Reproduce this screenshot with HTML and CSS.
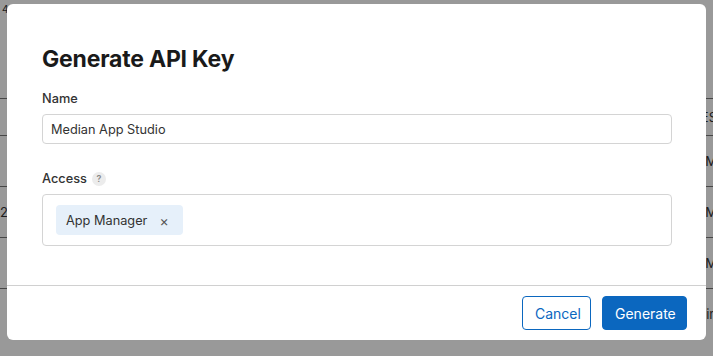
FILE: index.html
```html
<!DOCTYPE html>
<html lang="en">
<head>
  <meta charset="UTF-8">
  <title>Generate API Key</title>
  <link rel="stylesheet" href="styles.css">
</head>
<body>

  <div class="page">
    <div class="page-top">4/7/2024, 1:00 PM · Tylor Nguyen</div>
    <div class="row"><span></span><span>ES</span></div>
    <div class="row tall"><span></span><span>M</span></div>
    <div class="row tall"><span>2</span><span>M</span></div>
    <div class="row tall"><span></span><span>M</span></div>
    <div class="row tall"><span></span><span>in</span></div>
  </div>

  <div class="overlay"></div>

  <div class="modal">
    <div class="modal-body">
      <h1>Generate API Key</h1>

      <label class="field-label">Name</label>
      <div class="input">Median App Studio</div>

      <label class="field-label access">Access <span class="help">?</span></label>
      <div class="tag-box">
        <span class="tag">App Manager <span class="tag-x">&times;</span></span>
      </div>
    </div>

    <div class="modal-footer">
      <button class="btn btn-outline">Cancel</button>
      <button class="btn btn-primary">Generate</button>
    </div>
  </div>

</body>
</html>
```

FILE: styles.css
```css
* {
  margin: 0;
  padding: 0;
  box-sizing: border-box;
}

html, body {
  height: 100%;
  font-family: Inter, 'Noto Sans', sans-serif;
}

body {
  background: #fff;
  overflow: hidden;
  position: relative;
}

/* page behind the dialog */
.page {
  color: #333;
  font-size: 13px;
}

.page-top {
  height: 98px;
  padding: 3px 0 0 2px;
  line-height: 12px;
  font-size: 10px;
}

.row {
  display: flex;
  justify-content: space-between;
  border-top: 1px solid #777;
  height: 37px;
  align-items: center;
}

.row.tall {
  height: 51px;
}

.row span:last-child {
  margin-right: -4px;
}

.overlay {
  position: fixed;
  inset: 0;
  background: rgba(0, 0, 0, 0.4);
}

.modal {
  position: fixed;
  top: 4px;
  left: 7px;
  width: 699px;
  height: 336px;
  background: #fff;
  border-radius: 6px;
  display: flex;
  flex-direction: column;
}

.modal-body {
  flex: 1;
  padding: 41px 34px 0 35px;
}

h1 {
  font-size: 23px;
  font-weight: 700;
  line-height: 28px;
  color: #1a1a1a;
  letter-spacing: -0.2px;
  margin-bottom: 18px;
}

.field-label {
  display: flex;
  align-items: center;
  gap: 5px;
  font-size: 12.75px;
  font-weight: 500;
  color: #333;
  line-height: 16px;
  margin-bottom: 7px;
}

.field-label.access {
  margin-top: 27px;
}

.help {
  display: inline-flex;
  align-items: center;
  justify-content: center;
  width: 14px;
  height: 14px;
  border-radius: 50%;
  background: #ececec;
  color: #888;
  font-size: 9px;
  font-weight: 600;
}

.input {
  height: 30px;
  border: 1px solid #d4d4d4;
  border-radius: 4px;
  padding: 0 8px;
  display: flex;
  align-items: center;
  font-size: 12.75px;
  color: #333;
}

.tag-box {
  height: 52px;
  border: 1px solid #d4d4d4;
  border-radius: 4px;
  padding: 10px 13px;
  display: flex;
  align-items: center;
}

.tag {
  display: inline-flex;
  align-items: center;
  height: 30px;
  padding: 0 14px 0 10px;
  background: #e6f0fa;
  border-radius: 4px;
  font-size: 12.75px;
  color: #333;
}

.tag-x {
  margin-left: 12px;
  font-size: 14px;
  color: #555;
}

.modal-footer {
  border-top: 1px solid #d0d0d0;
  height: 55px;
  display: flex;
  justify-content: flex-end;
  align-items: center;
  gap: 11px;
  padding: 0 19px 0 0;
}

.btn {
  height: 34px;
  border-radius: 4px;
  font-family: Inter, 'Noto Sans', sans-serif;
  font-size: 14px;
  padding: 0 12px;
  cursor: pointer;
}

.btn-outline {
  background: #fff;
  color: #0b67bf;
  border: 1px solid #0b67bf;
  width: 69px;
}

.btn-primary {
  background: #0b67bf;
  color: #fff;
  border: 1px solid #0b67bf;
  width: 85px;
}
```
